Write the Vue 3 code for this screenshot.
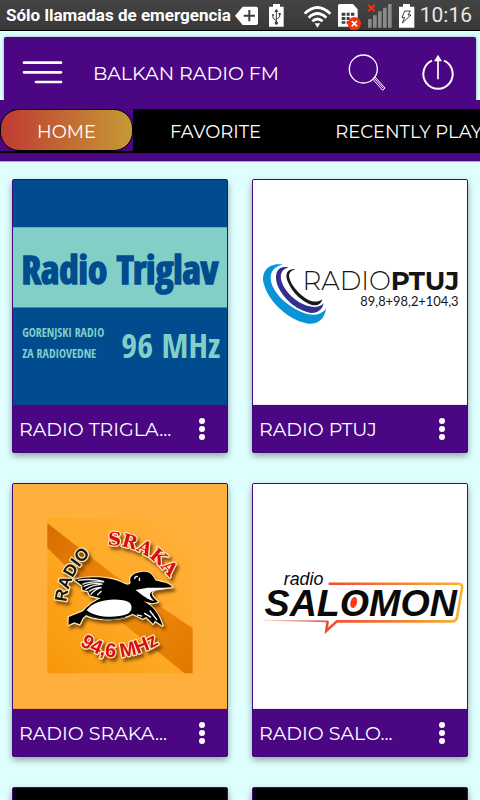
<script setup>
import { ref } from 'vue'

const tabs = ['HOME', 'FAVORITE', 'RECENTLY PLAYED']
const activeTab = ref('HOME')

const stations = [
  { id: 'triglav', name: 'RADIO TRIGLA...' },
  { id: 'ptuj', name: 'RADIO PTUJ' },
  { id: 'sraka', name: 'RADIO SRAKA...' },
  { id: 'salomon', name: 'RADIO SALO...' },
  { id: 'dark-1', name: '' },
  { id: 'dark-2', name: '' }
]
</script>

<template>
  <div class="page">
    <div class="status">
      <span class="carrier">Sólo llamadas de emergencia</span>
      <div class="status-left">
        <svg width="23" height="31" viewBox="-15 0 69 93">
          <path d="M-15 47 8 20H48Q54 20 54 26V69Q54 75 48 75H8Z" fill="#fff" />
          <path d="M11 47H45M28 30V64" stroke="#3c3c3c" stroke-width="6" />
        </svg>
        <svg width="17" height="31" viewBox="84 0 51 93">
          <path d="M99 12H120V20H131V80H87V20H99Z" fill="#fff" />
          <path d="M109 33V70M109 62 99 54V46M109 58 119 51V42" stroke="#3c3c3c" stroke-width="3" fill="none" />
          <path d="M103 36 109 26 115 36Z" fill="#3c3c3c" />
          <circle cx="109" cy="69" r="5" fill="#3c3c3c" />
          <circle cx="99" cy="45" r="3" fill="#3c3c3c" />
          <path d="M116 39H122V45H116Z" fill="#3c3c3c" />
        </svg>
      </div>
      <div class="status-right">
        <svg width="29" height="31" viewBox="189 0 87 93">
          <g fill="none" stroke="#fff" stroke-width="8">
            <path d="M194 41Q232 4 271 41" />
            <path d="M206 53Q232 28 259 53" />
            <path d="M217 64Q232 50 248 64" />
          </g>
          <path d="M224 70H241L232 83Z" fill="#fff" />
        </svg>
        <svg width="25" height="31" viewBox="288 0 75 93">
          <path d="M296 12H336L350 28V80H291V17Q291 12 296 12Z" fill="#fff" />
          <path d="M302 38H313V47H302ZM317 38H326V47H317ZM330 38H340V47H330ZM302 51H313V60H302ZM317 51H326V60H317ZM302 64H313V71H302ZM317 64H323V71H317Z" fill="#3c3c3c" />
          <circle cx="340" cy="71" r="20" fill="#f4330d" />
          <path d="M332 63 348 79M348 63 332 79" stroke="#fff" stroke-width="5" />
        </svg>
        <svg width="26" height="31" viewBox="378 0 78 93">
          <path d="M381 57H392V83H381ZM396 46H407V83H396ZM411 34H422V83H411ZM426 23H437V83H426ZM441 12H452V83H441Z" fill="#8a8a8a" />
          <path d="M382 15 401 34M401 15 382 34" stroke="#f4330d" stroke-width="6" />
        </svg>
        <svg width="17" height="31" viewBox="471 0 51 93">
          <path d="M486 12H507V20H520V83H474V20H486Z" fill="#fff" />
          <path d="M491 33H508L501 45H510L484 69L491 53H483Z" fill="none" stroke="#3c3c3c" stroke-width="3" />
        </svg>
        <span class="clock">10:16</span>
      </div>
    </div>

    <header>
      <div class="toolbar">
        <button class="icon-btn" aria-label="Menu">
          <svg width="41" height="25" viewBox="66 180 123 75">
            <path d="M72 188H183M72 217H183M108 246H183" stroke="#fff" stroke-width="8" stroke-linecap="round" />
          </svg>
        </button>
        <h1>BALKAN RADIO FM</h1>
        <button class="icon-btn" aria-label="Search">
          <svg width="40" height="40" viewBox="320 155 120 120" fill="none" stroke="#fff">
            <circle cx="369" cy="206" r="42" stroke-width="4" />
            <path d="M397 236 404 230 434 263 427 270ZM402 234 429 264" stroke-width="3" />
          </svg>
        </button>
        <button class="icon-btn power" aria-label="Exit">
          <svg width="36" height="40" viewBox="540 156 108 120">
            <path d="M576 182A44 44 0 1 0 612 182" fill="none" stroke="#fff" stroke-width="6" />
            <path d="M594 238V182" stroke="#fff" stroke-width="5" />
            <path d="M582 184 594 164 606 184Z" fill="#fff" />
          </svg>
        </button>
      </div>
      <div class="tab-area">
        <nav class="tabs">
          <button
            v-for="t in tabs"
            :key="t"
            class="tab"
            :class="{ active: t === activeTab }"
            @click="activeTab = t"
          >
            <span>{{ t }}</span>
          </button>
        </nav>
      </div>
    </header>

    <main class="grid">
      <article v-for="s in stations" :key="s.id" class="card">
        <svg v-if="s.id === 'triglav'" class="cover" viewBox="36 27 648 681">
          <rect x="36" y="27" width="648" height="681" fill="#004c8f" />
          <rect x="36" y="170" width="648" height="243" fill="#82cfc8" />
          <text class="narrow" x="62" y="342" font-size="118" fill="#004c8f" stroke="#004c8f" stroke-width="5">Radio Triglav</text>
          <g class="narrow" fill="#82cfc8">
            <text x="64" y="501" font-size="36">GORENJSKI RADIO</text>
            <text x="64" y="566" font-size="36">ZA RADIOVEDNE</text>
            <text x="364" y="566" font-size="104">96 MHz</text>
          </g>
        </svg>

        <svg v-else-if="s.id === 'ptuj'" class="cover" viewBox="36 27 648 681">
          <rect x="36" y="27" width="648" height="681" fill="#fff" />
          <path d="M126 283C82 276 59 306 69 342C82 394 143 452 203 462C235 465 253 446 257 417C240 438 214 440 183 427C132 404 94 364 90 329C87 306 100 289 126 283Z" fill="#0b93d8" />
          <path d="M143 292C111 285 99 310 109 343C124 383 164 420 207 429C230 432 246 420 250 400C236 414 216 414 192 405C155 389 127 357 121 328C118 309 125 297 143 292Z" fill="#322f91" />
          <path d="M165 298C139 294 131 312 142 337C155 368 185 398 216 406C232 409 243 401 246 388C234 397 220 397 204 390C177 376 152 347 146 323C143 309 150 301 165 298Z" fill="#191919" />
          <g class="logo" fill="#151515">
            <text class="wide" x="186" y="361" font-size="79" font-weight="300">RADIO<tspan font-weight="700">PTUJ</tspan></text>
            <text x="361" y="408" font-size="39">89,8+98,2+104,3</text>
          </g>
        </svg>

        <svg v-else-if="s.id === 'sraka'" class="cover" viewBox="36 24 648 681">
          <defs>
            <linearGradient id="sraka-bg" x1="0" y1="1" x2="1" y2="0">
              <stop offset="0" stop-color="#f79708" />
              <stop offset="0.5" stop-color="#ffaa28" />
              <stop offset="1" stop-color="#ffb13c" />
            </linearGradient>
            <linearGradient id="sraka-band" x1="0" y1="0" x2="1" y2="1">
              <stop offset="0" stop-color="#d66c00" />
              <stop offset="0.5" stop-color="#f08c10" />
              <stop offset="1" stop-color="#e07800" />
            </linearGradient>
            <filter id="sraka-shadow" x="-20%" y="-20%" width="150%" height="150%">
              <feDropShadow dx="7" dy="10" stdDeviation="5" flood-color="#6b3b00" flood-opacity="0.8" />
            </filter>
            <path id="arc-radio" d="M78 277Q84 186 172 112" />
            <path id="arc-sraka" d="M202 105Q322 102 402 220" />
            <path id="arc-mhz" d="M118 405Q237 492 392 382" />
          </defs>
          <rect x="36" y="24" width="648" height="681" fill="#ffb03c" />
          <g transform="translate(120 105)">
            <rect x="20" y="22" width="440" height="470" fill="url(#sraka-bg)" />
            <path d="M20 38 220 193 460 356V492H435L250 342 20 112Z" fill="url(#sraka-band)" />
            <g filter="url(#sraka-shadow)" stroke="#ffe9b0" stroke-width="7" paint-order="stroke" stroke-linejoin="round">
              <text class="sans" font-size="52" fill="#151515"><textPath href="#arc-radio">RADIO</textPath></text>
              <text class="serif" font-size="56" fill="#d8101c"><textPath href="#arc-sraka">SRAKA</textPath></text>
              <text class="sans" font-size="60" fill="#d8101c"><textPath href="#arc-mhz">94,6 MHz</textPath></text>
              <path d="M102 209C140 197 213 199 249 219C261 225 267 226 273 218C263 196 292 184 316 185C335 186 342 202 348 211C368 216 389 218 398 231L346 238C333 246 329 254 355 276L337 280L311 274C344 290 359 317 369 348L346 333 340 342 319 322 309 327 278 312C246 332 171 333 137 316L126 326 118 344 101 338 84 346 85 322 128 304C146 286 158 276 182 265L149 257 143 243 126 240 126 227Z" fill="#000" />
            </g>
            <path d="M139 301C164 268 229 262 266 276C280 285 277 305 262 313C225 327 165 323 139 301Z" fill="#fff" />
            <path d="M287 240 323 233 392 233 340 242C323 251 333 264 344 273C323 271 306 253 287 240Z" fill="#fff" />
            <path d="M112 211Q157 204 192 215Q147 213 126 223M130 229Q157 216 187 222Q154 225 135 239M146 244Q164 232 184 232Q162 239 151 254M171 256 184 243" fill="none" stroke="#eee" stroke-width="4" />
            <path d="M285 207Q283 198 294 199M299 203V213M313 310 334 323M330 302 352 331M291 315 307 319" stroke="#fff" stroke-width="4" fill="none" />
            <path d="M135 311Q188 339 255 323" fill="none" stroke="#222" stroke-width="3" />
          </g>
        </svg>

        <svg v-else-if="s.id === 'salomon'" class="cover" viewBox="36 24 648 681">
          <defs>
            <linearGradient id="salomon-line" gradientUnits="userSpaceOnUse" x1="260" y1="0" x2="672" y2="0">
              <stop offset="0" stop-color="#ee4b30" />
              <stop offset="1" stop-color="#f9b233" />
            </linearGradient>
            <linearGradient id="salomon-tail" gradientUnits="userSpaceOnUse" x1="68" y1="0" x2="260" y2="0">
              <stop offset="0" stop-color="#fbdcd8" />
              <stop offset="1" stop-color="#dc574b" />
            </linearGradient>
          </defs>
          <rect x="36" y="24" width="648" height="681" fill="#fff" />
          <path d="M265 326H658Q671 326 669 339L654 427Q651 440 638 440H290L258 469 262 440" fill="none" stroke="url(#salomon-line)" stroke-width="8" />
          <path d="M68 435 264 437V443L68 438Z" fill="url(#salomon-tail)" />
          <g class="italic" fill="#0a0a0a">
            <text x="129" y="330" font-size="54">radio</text>
            <text x="71" y="424" font-size="114" font-weight="700">SALOMON</text>
          </g>
          <ellipse cx="341" cy="383" rx="10" ry="17" fill="#ff3b12" transform="rotate(14 341 383)" />
        </svg>

        <svg v-else class="cover" viewBox="36 24 648 681">
          <rect x="36" y="24" width="648" height="681" fill="#000" />
        </svg>

        <div class="caption">
          <span>{{ s.name }}</span>
          <button class="more" aria-label="More options">
            <svg width="6" height="22" viewBox="0 0 6 22" fill="#fff">
              <circle cx="3" cy="3" r="3" />
              <circle cx="3" cy="11" r="3" />
              <circle cx="3" cy="19" r="3" />
            </svg>
          </button>
        </div>
      </article>
    </main>
  </div>
</template>

<style scoped>
.page {
  height: 100vh;
  display: flex;
  flex-direction: column;
  background-color: #dffffe;
  color: white;
  font-family: Montserrat, Inter, sans-serif;
}

button {
  padding: 0;
  border: none;
  background: none;
  color: inherit;
  font: inherit;
}

svg {
  display: block;
}

.status {
  flex: none;
  display: flex;
  align-items: center;
  height: 30px;
  padding: 0 8px 0 6px;
  border-bottom: 1px solid black;
  background: linear-gradient(#444, #383838);
  font-family: Roboto, sans-serif;
}

.carrier {
  font-size: 17px;
  font-weight: 700;
  line-height: 32px;
  white-space: nowrap;
}

.status-left {
  display: flex;
  gap: 10px;
  margin-left: 4px;
}

.status-right {
  display: flex;
  align-items: center;
  gap: 5px;
  margin-left: auto;
}

.clock {
  font-size: 21px;
  line-height: 32px;
  color: #e8e8e8;
}

header {
  flex: none;
  padding-top: 6px;
}

.toolbar {
  display: flex;
  align-items: center;
  height: 56px;
  margin: 0 4px;
  padding: 7px 20px 0 18px;
  border-radius: 2px 2px 0 0;
  background-color: #4a0683;
  box-shadow: 0 0 3px rgba(0, 0, 0, 0.4);
}

h1 {
  flex: 1;
  margin: 0 0 0 30px;
  padding-top: 3px;
  font-size: 19px;
  font-weight: 400;
  line-height: 24px;
  white-space: nowrap;
}

.power {
  margin-left: 33px;
}

.tab-area {
  position: relative;
  padding: 9px 0 8px;
  border-bottom: 1px solid #b5a3d8;
  background-color: #4a0683;
}

.tabs {
  display: flex;
  height: 42px;
  overflow: hidden;
  border-bottom: 2px solid black;
}

.tab {
  flex: none;
  padding: 3px 37px 0;
  background-color: black;
  font-size: 18px;
  white-space: nowrap;
}

.tab.active {
  padding: 3px 36px 0;
  border: 1px solid black;
  border-radius: 19px;
  background: linear-gradient(90deg, #bf3a33, #c59a34);
}

.grid {
  flex: 1;
  display: grid;
  grid-template-columns: 1fr 1fr;
  grid-auto-rows: max-content;
  align-content: start;
  gap: 30px 24px;
  padding: 17px 12px;
  overflow-y: auto;
  scrollbar-width: none;
}

.card {
  overflow: hidden;
  border-radius: 2px;
  border: 1px solid #3f0a80;
  background-color: #4a0683;
  box-shadow: 0 3px 7px rgba(0, 0, 0, 0.35);
}

.cover {
  width: 100%;
}

.caption {
  display: flex;
  align-items: center;
  justify-content: space-between;
  height: 44px;
  padding: 3px 20px 0 6px;
  font-size: 19px;
  white-space: nowrap;
}

.more {
  padding: 0 2px 2px;
}

.narrow {
  font-family: "Liberation Sans Narrow", "Open Sans Condensed", "Liberation Sans", sans-serif;
  font-weight: 700;
}

.logo {
  font-family: Lato, sans-serif;
}

.wide {
  font-family: Montserrat, Inter, sans-serif;
}

.sans {
  font-family: "Liberation Sans", sans-serif;
  font-weight: 700;
}

.serif {
  font-family: "DejaVu Serif", serif;
  font-weight: 700;
}

.italic {
  font-family: "Liberation Sans", sans-serif;
  font-style: italic;
}
</style>

<style>
body {
  margin: 0;
}
</style>
